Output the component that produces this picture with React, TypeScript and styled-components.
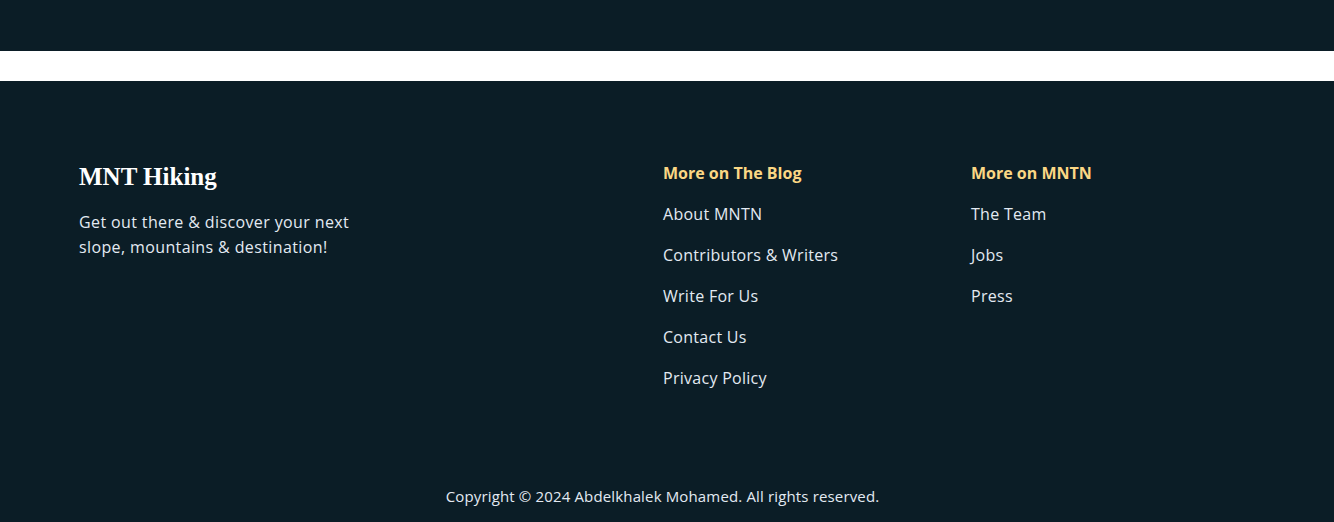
import React from "react";
import styled, { createGlobalStyle } from "styled-components";

const Global = createGlobalStyle`
  html, body { margin: 0; padding: 0; background: #0b1d26; }
  body { font-family: "Open Sans", "Noto Sans", sans-serif; }
`;

const Page = styled.div`
  display: flex;
  flex-direction: column;
  min-height: 522px;
  background: #0b1d26;
`;

const TopBar = styled.div`
  height: 51px;
  background: #0b1d26;
`;

const Band = styled.div`
  height: 30px;
  background: #ffffff;
`;

const Footer = styled.footer`
  background: #0b1d26;
  padding: 80px 79px 40px;
  display: flex;
  flex-direction: column;
  gap: 96px;
`;

const Columns = styled.div`
  display: grid;
  grid-template-columns: 584px 308px 1fr;
`;

const Brand = styled.div`
  display: flex;
  flex-direction: column;
  gap: 17px;
`;

const Logo = styled.h2`
  margin: 0;
  font-family: "Liberation Serif", "DejaVu Serif", serif;
  font-weight: 700;
  font-size: 25px;
  line-height: 32px;
  color: #ffffff;
`;

const Tagline = styled.p`
  margin: 0;
  width: 300px;
  font-size: 16px;
  line-height: 25px;
  letter-spacing: 0.38px;
  color: #e3eaf2;
`;

const LinkCol = styled.nav`
  display: flex;
  flex-direction: column;
  gap: 17px;
`;

const Heading = styled.h3`
  margin: 0;
  font-size: 16px;
  line-height: 24px;
  font-weight: 700;
  color: #fbd784;
`;

const FootLink = styled.a`
  font-size: 16px;
  line-height: 24px;
  letter-spacing: 0.28px;
  color: #e3eaf2;
  text-decoration: none;
`;

const Copyright = styled.p`
  margin: 0;
  padding-right: 9px;
  text-align: center;
  font-size: 15px;
  line-height: 21px;
  letter-spacing: 0.15px;
  color: #e3eaf2;
`;

const blog = ["About MNTN", "Contributors & Writers", "Write For Us", "Contact Us", "Privacy Policy"];
const mntn = ["The Team", "Jobs", "Press"];

export default function App() {
  return (
    <Page>
      <Global />
      <TopBar />
      <Band />
      <Footer>
        <Columns>
          <Brand>
            <Logo>MNT Hiking</Logo>
            <Tagline>Get out there &amp; discover your next slope, mountains &amp; destination!</Tagline>
          </Brand>
          <LinkCol>
            <Heading>More on The Blog</Heading>
            {blog.map((l) => (
              <FootLink key={l} href="#">{l}</FootLink>
            ))}
          </LinkCol>
          <LinkCol>
            <Heading>More on MNTN</Heading>
            {mntn.map((l) => (
              <FootLink key={l} href="#">{l}</FootLink>
            ))}
          </LinkCol>
        </Columns>
        <Copyright>Copyright © 2024 Abdelkhalek Mohamed. All rights reserved.</Copyright>
      </Footer>
    </Page>
  );
}
